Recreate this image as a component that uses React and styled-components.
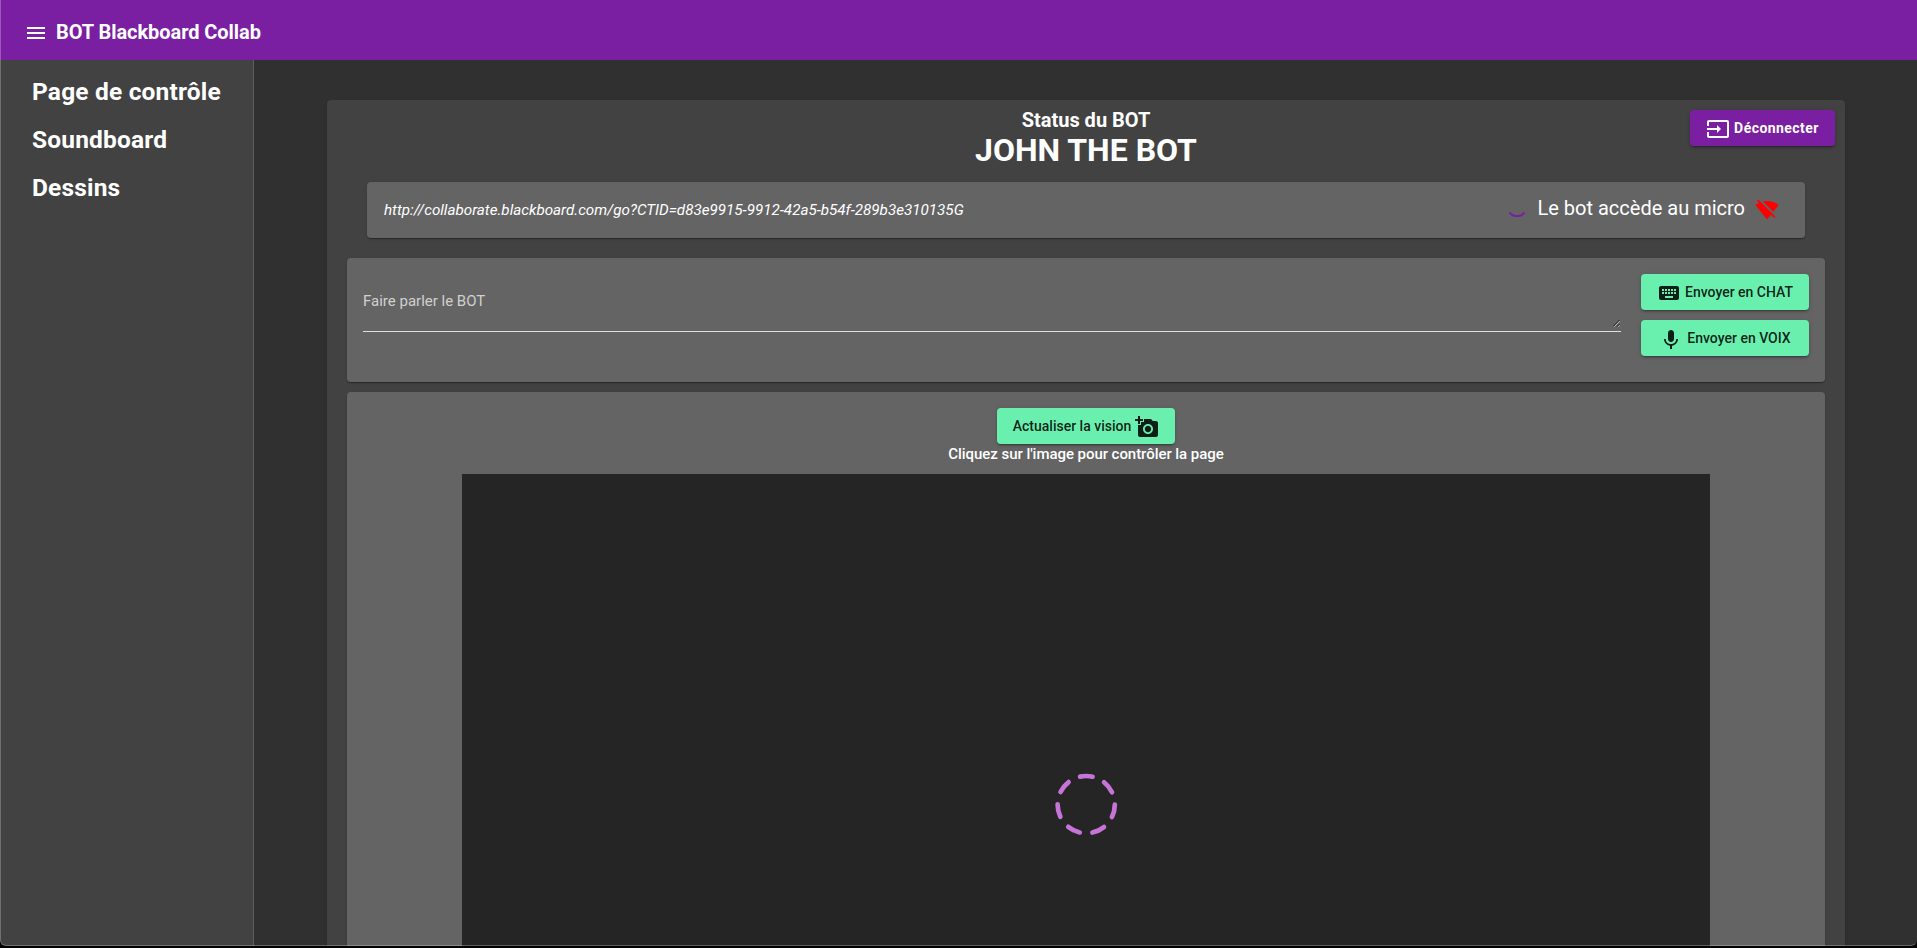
import React from "react";
import styled, { createGlobalStyle, css } from "styled-components";
import { MdMenu, MdInput, MdKeyboard, MdMic, MdAddAPhoto, MdSignalWifiOff } from "react-icons/md";

const GlobalStyle = createGlobalStyle`
  *, *::before, *::after { box-sizing: border-box; }
  body {
    margin: 0;
    background: #000;
    color: #fff;
    font-family: Roboto, "Liberation Sans", sans-serif;
    -webkit-font-smoothing: antialiased;
    overflow: hidden;
  }
`;

const raised = css`
  box-shadow: 0 2px 1px -1px rgba(0, 0, 0, 0.2), 0 1px 1px rgba(0, 0, 0, 0.14),
    0 1px 3px rgba(0, 0, 0, 0.12);
`;

const Window = styled.div`
  position: relative;
  display: flex;
  flex-direction: column;
  height: 946px;
  overflow: hidden;
  border-radius: 0 0 6px 6px;
  background: #303030;

  &::after {
    content: "";
    position: absolute;
    inset: 0;
    border: solid rgba(255, 255, 255, 0.25);
    border-width: 0 0 1px 1px;
    border-radius: 0 0 6px 6px;
    pointer-events: none;
  }
`;

const Toolbar = styled.header`
  flex: none;
  display: flex;
  align-items: center;
  gap: 8px;
  height: 60px;
  padding: 6px 24px 0;
  background: #7b1fa2;
`;

const AppTitle = styled.h1`
  margin: 0;
  padding-bottom: 2px;
  font-size: 20px;
  font-weight: 700;
  line-height: 24px;
  letter-spacing: -0.06px;
`;

const Body = styled.div`
  flex: 1;
  min-height: 0;
  display: flex;
`;

const Sidebar = styled.nav`
  flex: none;
  width: 254px;
  padding: 8px 0 0 32px;
  background: #424242;
  border-right: 1px solid #5f5f5f;
`;

const NavItem = styled.a`
  display: block;
  height: 48px;
  font-size: 24.5px;
  font-weight: 700;
  line-height: 48px;
  letter-spacing: 0.18px;
`;

const Main = styled.main`
  flex: 1;
  min-width: 0;
  padding: 40px 72px 0 73px;
`;

const Panel = styled.section`
  height: 1200px;
  padding: 0 20px;
  border-radius: 4px;
  background: #424242;
  ${raised}
`;

const PanelHeader = styled.div`
  position: relative;
  display: flex;
  flex-direction: column;
  align-items: center;
  height: 82px;
  padding-top: 8px;
`;

const StatusLabel = styled.div`
  font-size: 20px;
  font-weight: 700;
  line-height: 24px;
`;

const BotName = styled.div`
  font-size: 32px;
  font-weight: 700;
  line-height: 36px;
`;

const Button = styled.button`
  display: flex;
  align-items: center;
  justify-content: center;
  gap: 4px;
  height: 36px;
  padding: 0 16px;
  border: 0;
  border-radius: 4px;
  font: ${(p) => (p.$primary ? 700 : 500)} 14px/36px Roboto, "Liberation Sans", sans-serif;
  letter-spacing: ${(p) => (p.$primary ? "0.45px" : "normal")};
  white-space: nowrap;
  color: ${(p) => (p.$primary ? "#fff" : "rgba(0, 0, 0, 0.87)")};
  background: ${(p) => (p.$primary ? "#7b1fa2" : "#69f0ae")};
  box-shadow: 0 3px 1px -2px rgba(0, 0, 0, 0.2), 0 2px 2px rgba(0, 0, 0, 0.14),
    0 1px 5px rgba(0, 0, 0, 0.12);

  svg { flex: none; margin-top: ${(p) => p.$iconDrop || 2}px; }
`;

const LogoutSlot = styled.div`
  position: absolute;
  top: 10px;
  right: -10px;
  width: 145px;

  ${Button} { width: 100%; }
`;

const Card = styled.div`
  border-radius: 4px;
  background: #646464;
  ${raised}
`;

const StatusCard = styled(Card)`
  display: flex;
  align-items: center;
  justify-content: space-between;
  height: 56px;
  margin: 0 20px 20px;
  padding: 0 26px 0 17px;
`;

const SessionUrl = styled.em`
  padding-bottom: 1px;
  font-size: 15.2px;
`;

const MicStatus = styled.div`
  display: flex;
  align-items: center;
  font-size: 20px;
  line-height: 24px;

  span { margin: -4px 10px 0 11px; }
`;

const SpeakCard = styled(Card)`
  display: flex;
  gap: 20px;
  height: 124px;
  margin-bottom: 10px;
  padding: 16px;
`;

const Field = styled.label`
  flex: 1;
  display: flex;
  justify-content: space-between;
  align-items: flex-end;
  height: 58px;
  border-bottom: 1px solid #e0e0e0;
`;

const FieldLabel = styled.span`
  align-self: flex-start;
  padding-top: 17px;
  font-size: 15px;
  line-height: 20px;
  color: #d0d0d0;
`;

const Grip = styled.svg`
  margin: 0 1px 4px 0;
`;

const Actions = styled.div`
  display: flex;
  flex-direction: column;
  gap: 10px;
  width: 168px;
`;

const VisionCard = styled(Card)`
  display: flex;
  flex-direction: column;
  align-items: center;
  height: 900px;
  padding-top: 16px;

  ${Button} { width: 178px; }
`;

const Hint = styled.div`
  height: 30px;
  font-size: 15px;
  font-weight: 500;
  line-height: 20px;
  letter-spacing: -0.05px;
`;

const Screen = styled.div`
  display: flex;
  justify-content: center;
  width: 1248px;
  height: 720px;
  padding-top: 298px;
  background: #252525;
`;

const RADIUS = 28.6;
const DASH = (2 * Math.PI * RADIUS) / 14;

export default function App() {
  return (
    <>
      <GlobalStyle />
      <Window>
        <Toolbar>
          <MdMenu size={24} />
          <AppTitle>BOT Blackboard Collab</AppTitle>
        </Toolbar>
        <Body>
          <Sidebar>
            <NavItem>Page de contrôle</NavItem>
            <NavItem>Soundboard</NavItem>
            <NavItem>Dessins</NavItem>
          </Sidebar>
          <Main>
            <Panel>
              <PanelHeader>
                <StatusLabel>Status du BOT</StatusLabel>
                <BotName>JOHN THE BOT</BotName>
                <LogoutSlot>
                  <Button $primary>
                    <MdInput size={24} />
                    Déconnecter
                  </Button>
                </LogoutSlot>
              </PanelHeader>
              <StatusCard>
                <SessionUrl>
                  http://collaborate.blackboard.com/go?CTID=d83e9915-9912-42a5-b54f-289b3e310135G
                </SessionUrl>
                <MicStatus>
                  <svg width="20" height="20" viewBox="0 0 20 20">
                    <path d="M2.5 12.3A9.3 9.3 0 0 0 17.5 12.3" fill="none" stroke="#7b1fa2" strokeWidth="2" />
                  </svg>
                  <span>Le bot accède au micro</span>
                  <MdSignalWifiOff size={24} color="#f00" />
                </MicStatus>
              </StatusCard>
              <SpeakCard>
                <Field>
                  <FieldLabel>Faire parler le BOT</FieldLabel>
                  <Grip width="7" height="7" viewBox="0 0 7 7">
                    <path d="M0 6.5L6.5 0M4 6.5L6.5 4" stroke="#222" strokeWidth="1" />
                    <path d="M1.2 6.8L6.8 1.2M5.2 6.8L6.8 5.2" stroke="#ddd" strokeWidth=".7" />
                  </Grip>
                </Field>
                <Actions>
                  <Button>
                    <MdKeyboard size={24} />
                    Envoyer en CHAT
                  </Button>
                  <Button $iconDrop={3}>
                    <MdMic size={24} />
                    Envoyer en VOIX
                  </Button>
                </Actions>
              </SpeakCard>
              <VisionCard>
                <Button>
                  Actualiser la vision
                  <MdAddAPhoto size={24} />
                </Button>
                <Hint>Cliquez sur l'image pour contrôler la page</Hint>
                <Screen>
                  <svg width="64" height="64" viewBox="0 0 64 64">
                    <circle
                      cx="32.2"
                      cy="32.6"
                      r={RADIUS}
                      fill="none"
                      stroke="#c774d8"
                      strokeWidth="4.7"
                      strokeLinecap="round"
                      strokeDasharray={`${DASH} ${DASH}`}
                      strokeDashoffset={DASH / 2}
                      transform="rotate(-90 32.2 32.6)"
                    />
                  </svg>
                </Screen>
              </VisionCard>
            </Panel>
          </Main>
        </Body>
      </Window>
    </>
  );
}
